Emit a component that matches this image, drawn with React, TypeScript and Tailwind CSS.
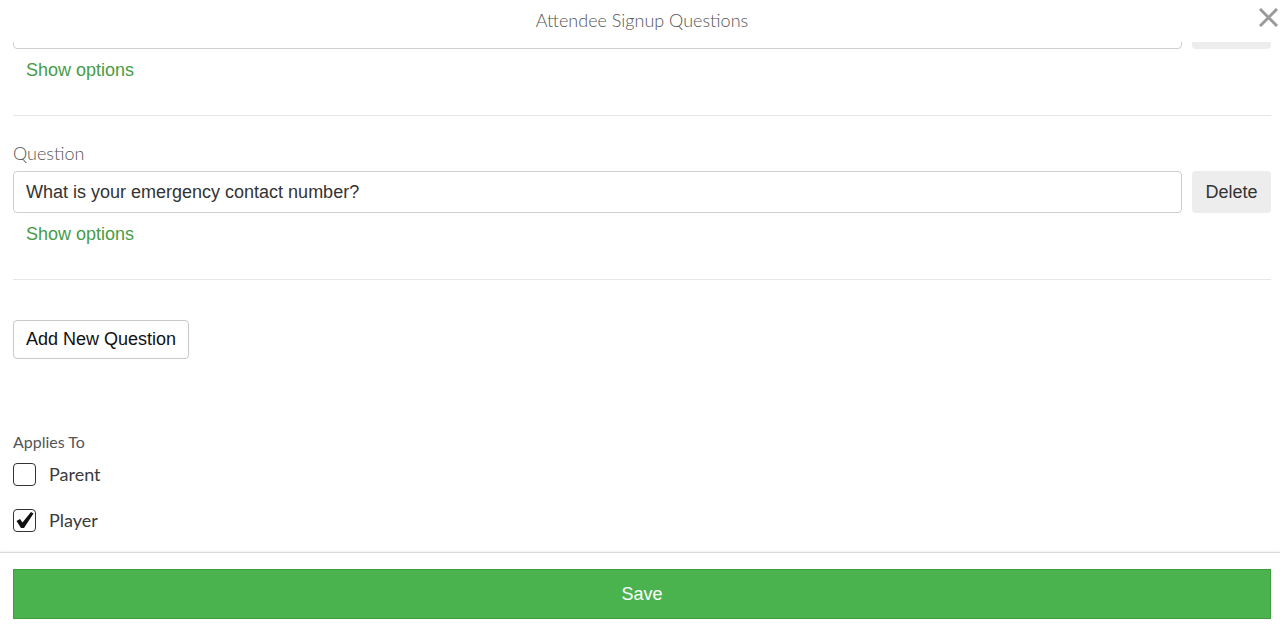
import React, { useState } from 'react';

const questions = [
  { id: 1, text: 'Do you have any allergies?' },
  { id: 2, text: 'What is your emergency contact number?' },
];

function CloseIcon() {
  return (
    <svg width="19" height="19" viewBox="0 0 19 19" className="text-[#9a9a9a]">
      <path d="M2 2L17 17M17 2L2 17" stroke="currentColor" strokeWidth="3" strokeLinecap="square" />
    </svg>
  );
}

function QuestionBlock({ text, first }: { text: string; first?: boolean }) {
  return (
    <div className={`border-b border-[#e6e6e6] pb-[33px] ${first ? '' : 'pt-[25px]'}`}>
      {!first && <p className="font-['Lato'] font-light text-[18px] leading-[24px] text-[#555]">Question</p>}
      <div className={`flex gap-[10px] ${first ? '' : 'mt-[6px]'}`}>
        <input
          readOnly
          value={text}
          className="flex-1 h-[42px] border border-[#cfcfcf] rounded-[4px] px-[12px] text-[18px] text-[#333] font-['Liberation_Sans'] outline-none"
        />
        <button className="w-[79px] h-[42px] rounded-[4px] bg-[#ededed] text-[18px] text-[#333] font-['Liberation_Sans']">Delete</button>
      </div>
      <button className="mt-[9px] ml-[13px] text-[18px] leading-[24px] text-[#479c47] font-['Liberation_Sans']">Show options</button>
    </div>
  );
}

function Check({ label, checked, onToggle }: { label: string; checked: boolean; onToggle: () => void }) {
  return (
    <label className="flex items-center gap-[13px] cursor-pointer" onClick={onToggle}>
      <span className="w-[23px] h-[23px] rounded-[4px] border-[1.5px] border-[#333] flex items-center justify-center">
        {checked && (
          <svg width="18" height="18" viewBox="0 0 18 18">
            <path d="M0.5 10L4 8L6.5 11.5L15 1L17.5 2.5L8 17L5 17Z" fill="#111" />
          </svg>
        )}
      </span>
      <span className="font-['Lato'] text-[18px] leading-[24px] text-[#3a3a3a]">{label}</span>
    </label>
  );
}

export default function App() {
  const [parent, setParent] = useState(false);
  const [player, setPlayer] = useState(true);

  return (
    <div className="h-[629px] w-full bg-white flex flex-col overflow-hidden">
      <header className="relative h-[42px] shrink-0 flex items-center justify-center bg-white z-10">
        <h1 className="font-['Lato'] font-light text-[18px] text-[#555] pl-[4px] -mt-[1px]">Attendee Signup Questions</h1>
        <button className="absolute right-[2px] top-[8px]"><CloseIcon /></button>
      </header>

      <main className="flex-1 overflow-hidden px-[13px] pr-[9px]">
        <div className="-mt-[35px]">
          {questions.map((q, i) => (
            <QuestionBlock key={q.id} text={q.text} first={i === 0} />
          ))}
          <button className="mt-[40px] h-[39px] px-[12px] border border-[#c9c9c9] rounded-[4px] text-[18px] text-[#111] font-['Liberation_Sans']">
            Add New Question
          </button>
          <p className="mt-[72px] font-['Lato'] text-[16px] leading-[22px] text-[#555]">Applies To</p>
          <div className="mt-[9px] flex flex-col gap-[22px]">
            <Check label="Parent" checked={parent} onToggle={() => setParent(!parent)} />
            <Check label="Player" checked={player} onToggle={() => setPlayer(!player)} />
          </div>
        </div>
      </main>

      <footer className="h-[77px] shrink-0 border-t border-[#dcdcdc] shadow-[0_-1px_2px_rgba(0,0,0,0.06)] px-[13px] pr-[9px] pt-[16px]">
        <button className="w-full h-[50px] bg-[#4bb34e] border border-[#3f9c41] text-white text-[18px] font-['Liberation_Sans']">Save</button>
      </footer>
    </div>
  );
}
